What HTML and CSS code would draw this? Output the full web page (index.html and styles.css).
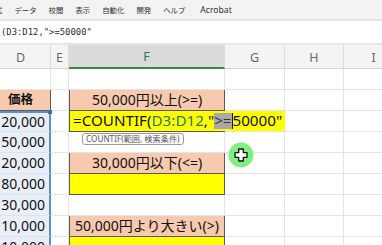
FILE: index.html
```html
<!DOCTYPE html>
<html lang="ja">
<head>
<meta charset="utf-8">
<link rel="stylesheet" href="styles.css">
</head>
<body>
<div class="app">
  <div class="ribbon">
    <span class="tab first">式</span>
    <span class="tab">データ</span>
    <span class="tab">校閲</span>
    <span class="tab">表示</span>
    <span class="tab">自動化</span>
    <span class="tab">開発</span>
    <span class="tab">ヘルプ</span>
    <span class="tab latin">Acrobat</span>
  </div>
  <div class="fbar"><span class="ftext">(D3:D12,"&gt;=50000"</span></div>
  <div class="sheet">
    <div class="grid">
      <div class="hd">D</div><div class="hd">E</div><div class="hd hd-sel">F</div><div class="hd">G</div><div class="hd">H</div><div class="hd">I</div>

      <div class="c"></div><div class="c"></div><div class="c"></div><div class="c"></div><div class="c"></div><div class="c"></div>

      <div class="c head-d">価格</div><div class="c"></div><div class="c salmon">50,000円以上(&gt;=)</div><div class="c"></div><div class="c"></div><div class="c"></div>

      <div class="c num rng rng-top">20,000</div><div class="c"></div><div class="c yellow active"></div><div class="c"></div><div class="c"></div><div class="c"></div>

      <div class="c num rng">50,000</div><div class="c"></div><div class="c"></div><div class="c"></div><div class="c"></div><div class="c"></div>

      <div class="c num rng">20,000</div><div class="c"></div><div class="c salmon">30,000円以下(&lt;=)</div><div class="c"></div><div class="c"></div><div class="c"></div>

      <div class="c num rng">80,000</div><div class="c"></div><div class="c yellow"></div><div class="c"></div><div class="c"></div><div class="c"></div>

      <div class="c num rng">30,000</div><div class="c"></div><div class="c"></div><div class="c"></div><div class="c"></div><div class="c"></div>

      <div class="c num rng">10,000</div><div class="c"></div><div class="c salmon">50,000円より大きい(&gt;)</div><div class="c"></div><div class="c"></div><div class="c"></div>

      <div class="c num rng">10,000</div><div class="c"></div><div class="c yellow"></div><div class="c"></div><div class="c"></div><div class="c"></div>
    </div>
    <div class="handle"></div>
    <div class="editor">=COUNTIF(<span class="ref">D3:D12</span>,"<span class="sel">&gt;=</span><span class="caret"></span>50000"</div>
    <div class="tip">COUNTIF(範囲, 検索条件)</div>
    <div class="cursor">
      <svg width="26" height="26" viewBox="0 0 26 26">
        <circle cx="13" cy="13" r="12.5" fill="#80ee80"/>
        <path d="M10.7 7h4.6v3.7h3.7v4.6h-3.7v3.7h-4.6v-3.7h-3.7v-4.6h3.7z" fill="#fff" stroke="#111" stroke-width="1.3" stroke-linejoin="round"/>
      </svg>
    </div>
  </div>
</div>
</body>
</html>
```

FILE: styles.css
```css
* { box-sizing: border-box; }
html, body { margin: 0; padding: 0; }
body {
  width: 382px;
  height: 245px;
  overflow: hidden;
  background: #ffffff;
  font-family: "Noto Sans", "Noto Sans CJK JP", sans-serif;
}
.app { width: 382px; height: 245px; overflow: hidden; }

.ribbon {
  height: 21px;
  background: #f3f3f3;
  border-bottom: 2px solid #e3e3e3;
  display: flex;
  align-items: center;
  gap: 12px;
  padding-left: 0;
  font-family: "Noto Sans CJK JP", sans-serif;
  font-size: 7.4px;
  color: #333333;
}
.tab.first { margin-left: -5px; }
.tab.latin { font-family: "Noto Sans", sans-serif; font-size: 8.6px; margin-left: 3px; }

.fbar {
  height: 24px;
  background: #ffffff;
  border-bottom: 2px solid #e6e6e6;
  display: flex;
  align-items: center;
  padding-left: 1px;
}
.ftext {
  font-family: "DejaVu Sans Mono", monospace;
  font-size: 8.9px;
  color: #2e2e2e;
}

.sheet { position: relative; margin-left: -9px; }
.grid {
  display: grid;
  grid-template-columns: 60px 18px 156px 60px 59px 60px;
  grid-template-rows: 24px repeat(9, 21px);
}
.hd {
  background: #f4f4f4;
  border-right: 1px solid #dcdcdc;
  border-bottom: 1px solid #d4d4d4;
  color: #6a6a6a;
  font-size: 12.5px;
  display: flex;
  align-items: center;
  justify-content: center;
  padding-top: 1px;
}
.hd-sel {
  background: #dadada;
  border-bottom: 2px solid #3a8a4f;
  color: #2f7a45;
}
.c {
  border-right: 1px solid #e4e4e4;
  border-bottom: 1px solid #e4e4e4;
  font-size: 14px;
  color: #111;
  display: flex;
  align-items: center;
  white-space: nowrap;
  line-height: 1;
}
.salmon {
  background: #f7c9ae;
  border: 1px solid #5a5a5a;
  border-top: none;
  justify-content: center;
}
.yellow {
  background: #ffff00;
  border: 1px solid #5a5a5a;
  border-top: none;
}
.head-d {
  background: #f7c9ae;
  border: 1px solid #5a5a5a;
  border-top: none;
  border-left: none;
  justify-content: center;
  font-weight: 700;
  font-size: 12.5px;
}
.num {
  justify-content: flex-end;
  padding-right: 4px;
}
.rng {
  background: #e9eff8;
  border-right: 2px solid #5b8fd0;
  border-bottom-color: #dfe4ec;
}
.rng-top { border-top: 2px solid #5b8fd0; }
.handle {
  position: absolute;
  left: 57px;
  top: 65px;
  width: 4px;
  height: 4px;
  background: #3f6fb5;
}
.editor {
  position: absolute;
  left: 78px;
  top: 66px;
  width: 216px;
  height: 20px;
  background: #ffff00;
  border-left: 1px solid #3d6b2f;
  font-size: 15.2px;
  color: #111;
  display: flex;
  align-items: center;
  padding-left: 3px;
  white-space: nowrap;
  line-height: 1;
}
.ref { color: #2c7a5a; }
.sel { background: #a9a9a9; color: #333; }
.caret { display: inline-block; width: 1px; height: 16px; background: #111; }
.tip {
  position: absolute;
  left: 91px;
  top: 88px;
  height: 12px;
  padding: 0 3px;
  border: 1px solid #9a9a9a;
  border-radius: 3px;
  background: #fff;
  font-family: "Noto Sans", "Noto Sans CJK JP", sans-serif;
  font-size: 8.2px;
  color: #555;
  display: flex;
  align-items: center;
  line-height: 1;
}
.cursor {
  position: absolute;
  left: 237px;
  top: 97px;
  width: 26px;
  height: 26px;
}
```
